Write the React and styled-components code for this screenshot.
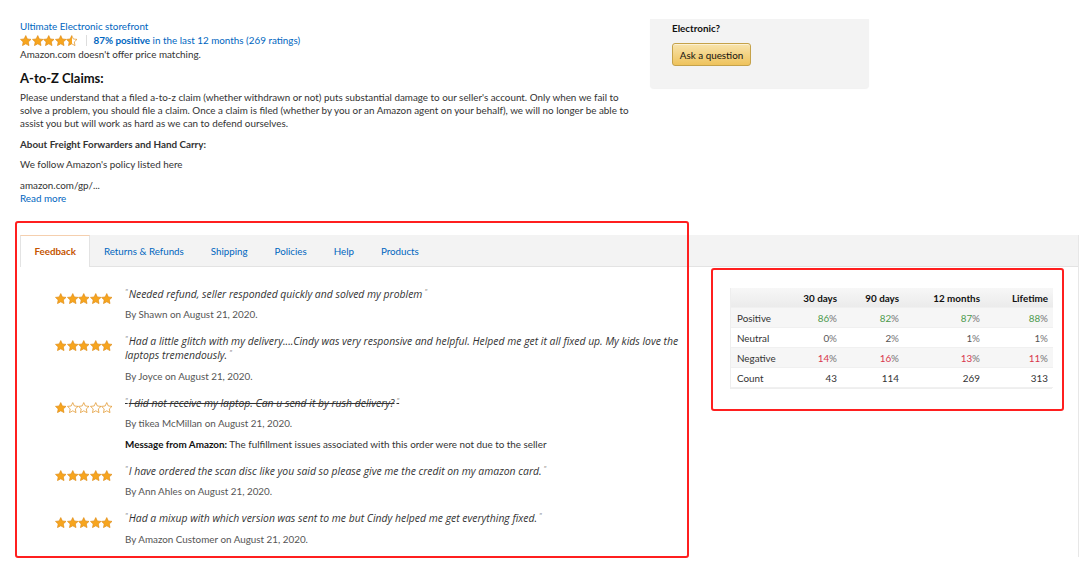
import React from 'react';
import styled, { createGlobalStyle } from 'styled-components';

const GlobalStyle = createGlobalStyle`
  html, body { margin: 0; padding: 0; background: #fff; }
  body {
    font-family: Lato, "Liberation Sans", Arial, sans-serif;
    color: #333;
  }
  * { box-sizing: border-box; }
`;

const Page = styled.div`
  position: relative;
  width: 1080px;
  height: 573px;
  overflow: hidden;
  padding-top: 19px;
`;

const Top = styled.div`
  display: flex;
  padding-left: 20px;
`;

const TopMain = styled.div`
  width: 630px;
  font-size: 9.85px;
  line-height: 14px;
`;

const Link = styled.a`
  color: #0066c0;
  text-decoration: none;
  font-weight: ${(p) => (p.$bold ? 700 : 400)};
  cursor: pointer;
`;

const Line = styled.div`
  line-height: 14px;
  color: #333;
`;

const RatingRow = styled.div`
  display: flex;
  align-items: center;
  height: 14px;
`;

const Sep = styled.span`
  display: inline-block;
  width: 1px;
  height: 11px;
  background: #ddd;
  margin: 0 7px 0 8px;
`;

const Heading = styled.h2`
  margin: 8px 0 0;
  font-size: 13px;
  line-height: 18px;
  font-weight: 700;
  color: #111;
`;

const Para = styled.p`
  margin: ${(p) => p.$mt || 0}px 0 0;
  max-width: 617px;
  font-size: 9.85px;
  line-height: 13px;
  color: #333;
  font-weight: ${(p) => (p.$bold ? 700 : 400)};
`;

const Card = styled.div`
  width: 219px;
  height: 69px;
  background: #f3f3f3;
  border-radius: 0 0 4px 4px;
  box-shadow: 0 1px 1px rgba(0, 0, 0, 0.06);
  padding: 2px 0 0 22px;
`;

const CardTitle = styled.div`
  font-size: 9.85px;
  line-height: 14px;
  font-weight: 700;
  color: #111;
`;

const AskButton = styled.button`
  margin-top: 8px;
  width: 79px;
  height: 23px;
  border: 1px solid #c5a24a;
  border-radius: 3px;
  background: linear-gradient(#f8e3ad, #eec35c);
  box-shadow: inset 0 1px 0 rgba(255, 255, 255, 0.5);
  font-family: inherit;
  font-size: 9.85px;
  color: #111;
  padding: 0;
`;

const Panel = styled.div`
  margin-top: 29.5px;
  margin-left: 20px;
  width: 1059px;
  border-right: 1px solid #e7e7e7;
`;

const TabBar = styled.div`
  display: flex;
  height: 32px;
  background: #f3f3f3;
  border-bottom: 1px solid #e3e3e3;
`;

const Tab = styled.div`
  display: flex;
  align-items: center;
  height: ${(p) => (p.$active ? 32 : 31)}px;
  padding: 0 ${(p) => (p.$active ? 13.5 : 12.5)}px;
  font-size: 9.75px;
  font-weight: ${(p) => (p.$active ? 700 : 400)};
  color: ${(p) => (p.$active ? '#c45500' : '#0066c0')};
  background: ${(p) => (p.$active ? '#fff' : 'transparent')};
  border-left: 1px solid ${(p) => (p.$active ? '#e3e3e3' : 'transparent')};
  border-right: 1px solid ${(p) => (p.$active ? '#e3e3e3' : 'transparent')};
  border-top: 1px solid ${(p) => (p.$active ? '#f5cfae' : 'transparent')};
  margin-bottom: ${(p) => (p.$active ? -1 : 0)}px;
`;

const Body = styled.div`
  display: flex;
  height: 290px;
`;

const Reviews = styled.div`
  width: 670px;
  padding: 20px 0 0 35px;
`;

const Review = styled.div`
  display: grid;
  grid-template-columns: 70px 560px;
  margin-bottom: 13px;
`;

const StarsCell = styled.div`
  display: flex;
  padding-top: 6px;
`;

const ReviewBody = styled.div`
  font-size: 9.85px;
  line-height: 14px;
`;

const Quote = styled.div`
  font-family: "Open Sans", "Noto Sans", sans-serif;
  font-style: italic;
  font-size: 10.4px;
  color: #333;
  line-height: 14px;
  text-decoration: ${(p) => (p.$struck ? 'line-through' : 'none')};
`;

const QuoteMark = styled.span`
  vertical-align: top;
  font-size: 7px;
  line-height: 9px;
  color: #888;
  margin: 0 ${(p) => (p.$end ? 0 : 1)}px 0 ${(p) => (p.$end ? 2 : 0)}px;
`;

const By = styled.div`
  margin-top: 6.5px;
  color: #555;
  line-height: 14px;
`;

const Message = styled.div`
  margin-top: 6.5px;
  color: #333;
  line-height: 14px;
  b { font-weight: 700; color: #111; }
`;

const Metrics = styled.div`
  padding: 21px 0 0 40px;
`;

const Table = styled.div`
  width: 322px;
  display: grid;
  grid-template-columns: 60px 51px 62px 81px 68px;
  border: 1px solid #eee;
  border-top: none;
  font-size: 9.85px;
`;

const Cell = styled.div`
  height: 20px;
  line-height: 20px;
  padding: 0 ${(p) => (p.$label ? 0 : 5)}px 0 ${(p) => (p.$label ? 6 : 0)}px;
  text-align: ${(p) => (p.$label ? 'left' : 'right')};
  font-weight: ${(p) => (p.$head ? 700 : 400)};
  color: ${(p) => (p.$head ? '#111' : '#333')};
  background: ${(p) =>
    p.$head ? 'linear-gradient(#f7f7f7, #ebebeb)' : p.$shade ? '#f6f6f6' : '#fff'};
  border-bottom: 1px solid #f0f0f0;
`;

const Num = styled.span`
  color: ${(p) => p.$c};
`;

const Pct = styled.span`
  color: #777;
`;

const RedBox = styled.div`
  position: absolute;
  border: 2.5px solid #ff1f1f;
  border-radius: 3px;
  pointer-events: none;
`;

const STAR = 'M6 0.6l1.65 3.55 3.85.45-2.85 2.65.75 3.85L6 9.2l-3.4 1.9.75-3.85L.5 4.6l3.85-.45z';

function Star({ fill = 'full', id }) {
  const gid = `half-${id}`;
  return (
    <svg width="11.5" height="11" viewBox="0 0 12 11.5" style={{ display: 'block' }}>
      {fill === 'half' && (
        <defs>
          <linearGradient id={gid} x1="0" x2="1" y1="0" y2="0">
            <stop offset="50%" stopColor="#f7a51e" />
            <stop offset="50%" stopColor="#fff" />
          </linearGradient>
        </defs>
      )}
      <path
        d={STAR}
        fill={fill === 'full' ? '#f7a51e' : fill === 'half' ? `url(#${gid})` : '#fff'}
        stroke="#de8a14"
        strokeWidth="0.7"
        strokeLinejoin="round"
      />
    </svg>
  );
}

function Stars({ value, id }) {
  return (
    <>
      {[0, 1, 2, 3, 4].map((i) => {
        const f = value >= i + 1 ? 'full' : value > i ? 'half' : 'empty';
        return <Star key={i} fill={f} id={`${id}-${i}`} />;
      })}
    </>
  );
}

const reviews = [
  { stars: 5, text: 'Needed refund, seller responded quickly and solved my problem', by: 'Shawn' },
  {
    stars: 5,
    text: 'Had a little glitch with my delivery....Cindy was very responsive and helpful. Helped me get it all fixed up. My kids love the laptops tremendously.',
    by: 'Joyce',
  },
  {
    stars: 1,
    text: 'I did not receive my laptop. Can u send it by rush delivery?',
    by: 'tikea McMillan',
    struck: true,
    message: 'The fulfillment issues associated with this order were not due to the seller',
  },
  {
    stars: 5,
    text: 'I have ordered the scan disc like you said so please give me the credit on my amazon card.',
    by: 'Ann Ahles',
  },
  {
    stars: 5,
    text: 'Had a mixup with which version was sent to me but Cindy helped me get everything fixed.',
    by: 'Amazon Customer',
  },
];

const green = '#4d9a4d';
const red = '#d9364c';

const rows = [
  { label: 'Positive', vals: ['86', '82', '87', '88'], color: green, pct: true, shade: true },
  { label: 'Neutral', vals: ['0', '2', '1', '1'], color: '#555', pct: true },
  { label: 'Negative', vals: ['14', '16', '13', '11'], color: red, pct: true, shade: true },
  { label: 'Count', vals: ['43', '114', '269', '313'], color: '#333' },
];

const tabs = ['Feedback', 'Returns & Refunds', 'Shipping', 'Policies', 'Help', 'Products'];

export default function App() {
  return (
    <Page>
      <GlobalStyle />
      <Top>
        <TopMain>
          <Line>
            <Link>Ultimate Electronic storefront</Link>
          </Line>
          <RatingRow>
            <Stars value={4.5} id="top" />
            <Sep />
            <Link $bold>87% positive</Link>
            <Link>&nbsp;in the last 12 months (269 ratings)</Link>
          </RatingRow>
          <Line>Amazon.com doesn't offer price matching.</Line>
          <Heading>A-to-Z Claims:</Heading>
          <Para $mt={3.5}>
            Please understand that a filed a-to-z claim (whether withdrawn or not) puts substantial damage to our
            seller's account. Only when we fail to solve a problem, you should file a claim. Once a claim is filed
            (whether by you or an Amazon agent on your behalf), we will no longer be able to assist you but will work
            as hard as we can to defend ourselves.
          </Para>
          <Para $mt={8} $bold>
            About Freight Forwarders and Hand Carry:
          </Para>
          <Para $mt={7}>We follow Amazon's policy listed here</Para>
          <Para $mt={8.5}>amazon.com/gp/...</Para>
          <Para>
            <Link>Read more</Link>
          </Para>
        </TopMain>
        <Card>
          <CardTitle>Electronic?</CardTitle>
          <AskButton>Ask a question</AskButton>
        </Card>
      </Top>

      <Panel>
        <TabBar>
          {tabs.map((t, i) => (
            <Tab key={t} $active={i === 0}>
              {t}
            </Tab>
          ))}
        </TabBar>
        <Body>
          <Reviews>
            {reviews.map((r, i) => (
              <Review key={i}>
                <StarsCell>
                  <Stars value={r.stars} id={`r${i}`} />
                </StarsCell>
                <ReviewBody>
                  <Quote $struck={r.struck}>
                    <QuoteMark>"</QuoteMark>
                    {r.text}
                    <QuoteMark $end>"</QuoteMark>
                  </Quote>
                  <By>By {r.by} on August 21, 2020.</By>
                  {r.message && (
                    <Message>
                      <b>Message from Amazon:</b> {r.message}
                    </Message>
                  )}
                </ReviewBody>
              </Review>
            ))}
          </Reviews>
          <Metrics>
            <Table>
              <Cell $head $label />
              <Cell $head>30 days</Cell>
              <Cell $head>90 days</Cell>
              <Cell $head>12 months</Cell>
              <Cell $head>Lifetime</Cell>
              {rows.map((row) => (
                <React.Fragment key={row.label}>
                  <Cell $label $shade={row.shade}>
                    {row.label}
                  </Cell>
                  {row.vals.map((v, j) => (
                    <Cell key={j} $shade={row.shade}>
                      <Num $c={row.color}>{v}</Num>
                      {row.pct && <Pct>%</Pct>}
                    </Cell>
                  ))}
                </React.Fragment>
              ))}
            </Table>
          </Metrics>
        </Body>
      </Panel>

      <RedBox style={{ left: 15, top: 221, width: 674, height: 337 }} />
      <RedBox style={{ left: 711, top: 268, width: 353, height: 143 }} />
    </Page>
  );
}
